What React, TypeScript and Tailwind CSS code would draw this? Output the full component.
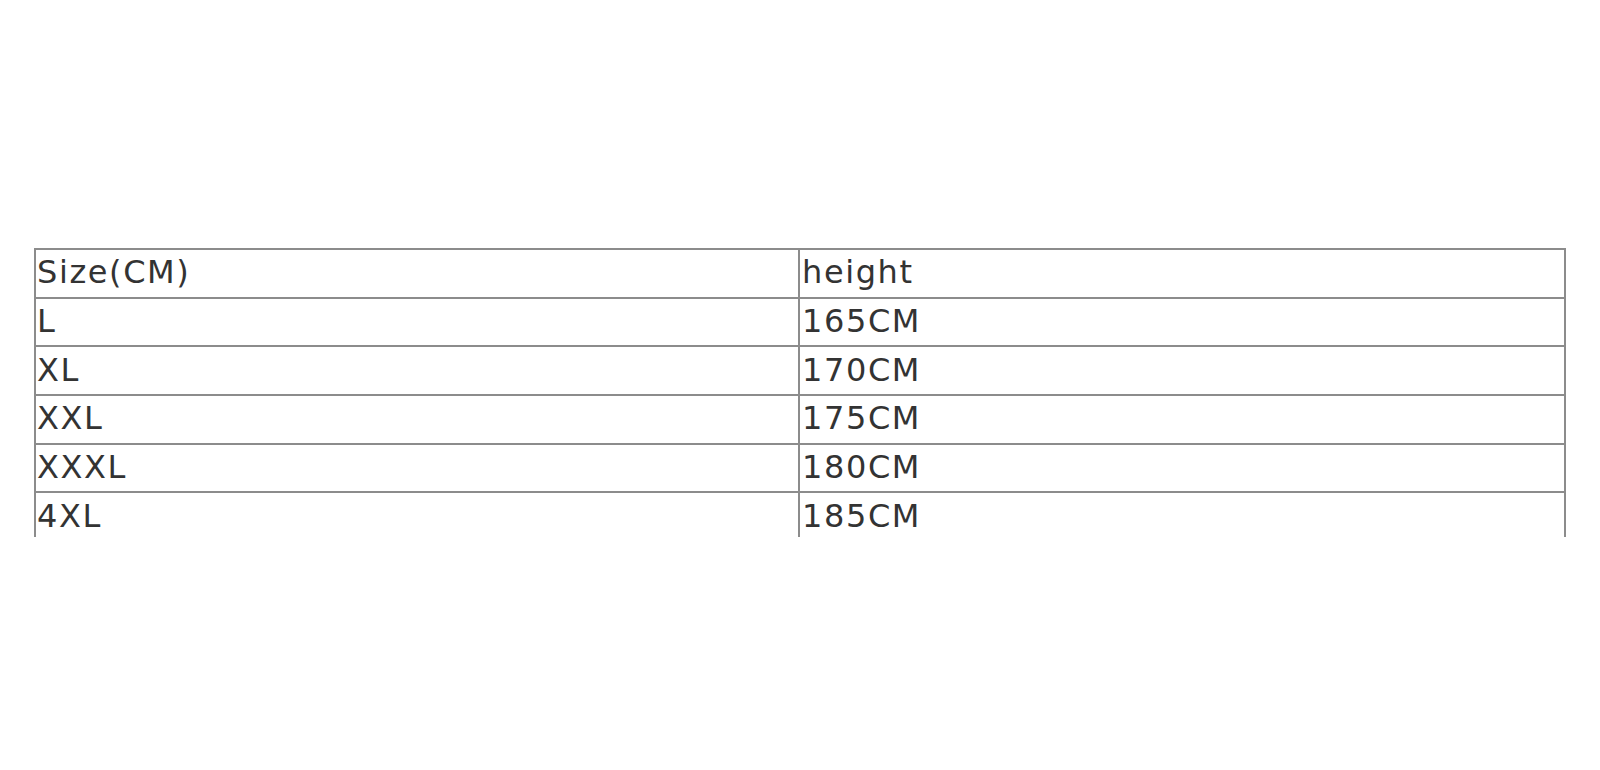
const rows = [
  ["Size(CM)", "height"],
  ["L", "165CM"],
  ["XL", "170CM"],
  ["XXL", "175CM"],
  ["XXXL", "180CM"],
  ["4XL", "185CM"],
];

export default function App() {
  return (
    <div className="w-[1600px] h-[770px] bg-white overflow-hidden" style={{ fontFamily: "'DejaVu Sans', 'Noto Sans', sans-serif" }}>
      <div className="pt-[248px] px-[34px]">
        {/* table is cut off at the bottom, like the original */}
        <div className="h-[289px] overflow-hidden">
          <table className="w-full border-collapse table-fixed">
            <colgroup>
              <col className="w-[764px]" />
              <col />
            </colgroup>
            <tbody>
              {rows.map(([size, height], i) => (
                <tr key={i} className="h-[48.7px]">
                  <td className="border-2 border-[#8c8c8c] pl-[1px] pb-[2px] text-[32px] tracking-[1.6px] leading-none text-[#333] align-middle">
                    {size}
                  </td>
                  <td className="border-2 border-[#8c8c8c] pl-[2px] pb-[2px] text-[32px] tracking-[1.6px] leading-none text-[#333] align-middle">
                    {height}
                  </td>
                </tr>
              ))}
            </tbody>
          </table>
        </div>
      </div>
    </div>
  );
}
